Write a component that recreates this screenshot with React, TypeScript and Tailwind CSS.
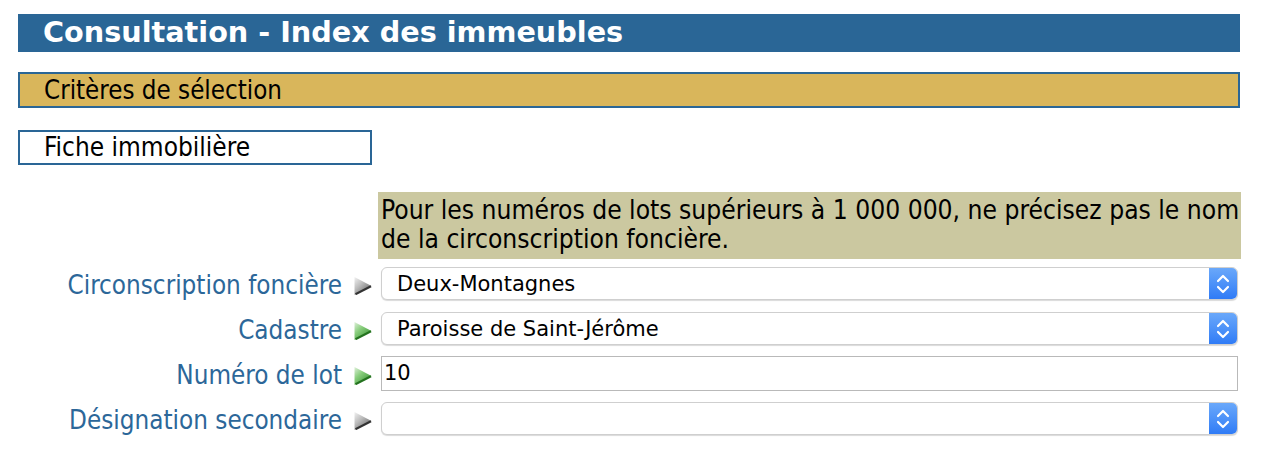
import React from "react";

const tahoma = { fontFamily: '"DejaVu Sans Condensed", "DejaVu Sans", sans-serif' };

function Arrow({ green }: { green?: boolean }) {
  const id = green ? "ag" : "agr";
  return (
    <svg width="18" height="18" viewBox="0 0 18 18" className="shrink-0">
      <defs>
        <linearGradient id={id} x1="0" y1="0" x2="0.9" y2="1">
          {green ? (
            <>
              <stop offset="0" stopColor="#dff0da" />
              <stop offset="0.4" stopColor="#86cc7a" />
              <stop offset="1" stopColor="#2c8a29" />
            </>
          ) : (
            <>
              <stop offset="0" stopColor="#f2f2f2" />
              <stop offset="0.4" stopColor="#bdbdbd" />
              <stop offset="1" stopColor="#5a5a5a" />
            </>
          )}
        </linearGradient>
      </defs>
      <polygon points="0.5,0 17.5,9 0.5,18" fill={`url(#${id})`} />
      <line x1="1.5" y1="17.2" x2="17" y2="9.3" stroke={green ? "#24721f" : "#333"} strokeWidth="2.2" />
    </svg>
  );
}

function SelectBox({ value }: { value: string }) {
  return (
    <div className="flex h-[33px] flex-1 items-center rounded-[6px] border border-[#cfcfcf] bg-white shadow-[0_1px_1px_rgba(0,0,0,0.15)] overflow-hidden">
      <div
        className="flex-1 pl-[15px] pt-[2px] text-[21px] text-black"
        style={{ fontFamily: '"DejaVu Sans", sans-serif' }}
      >
        {value}
      </div>
      <div className="flex h-full w-[28px] items-center justify-center bg-gradient-to-b from-[#6aa8fa] to-[#2f7bf6]">
        <svg width="14" height="22" viewBox="0 0 14 22">
          <polyline points="2,8 7,3 12,8" fill="none" stroke="white" strokeWidth="2.2" strokeLinecap="round" strokeLinejoin="round" />
          <polyline points="2,14 7,19 12,14" fill="none" stroke="white" strokeWidth="2.2" strokeLinecap="round" strokeLinejoin="round" />
        </svg>
      </div>
    </div>
  );
}

function Row({ label, green, children }: { label: string; green?: boolean; children: React.ReactNode }) {
  return (
    <div className="flex h-[45px] items-center">
      <div className="w-[324px] pt-[4px] text-right text-[25.8px] text-[#2c6799]" style={tahoma}>
        {label}
      </div>
      <div className="ml-[12px] mr-[9px] flex items-center pt-[4px]">
        <Arrow green={green} />
      </div>
      <div className="mr-[2px] flex flex-1">{children}</div>
    </div>
  );
}

export default function App() {
  return (
    <div className="h-[462px] w-[1262px] bg-white pl-[18px] pt-[14px]" style={tahoma}>
      <div className="w-[1222px]">
        <div
          className="flex h-[38px] items-center bg-[#2a6696] pl-[25px] text-[28.7px] font-bold text-white"
          style={{ fontFamily: '"DejaVu Sans", sans-serif' }}
        >
          Consultation - Index des immeubles
        </div>
        <div className="mt-[20px] flex h-[36px] items-center border-2 border-[#2a6696] bg-[#d9b65b] pl-[24px] text-[25.7px] text-black">
          Critères de sélection
        </div>
        <div className="mt-[22px] flex h-[35px] w-[354px] items-center border-2 border-[#2a6696] bg-white pl-[24px] text-[26px] text-black">
          Fiche immobilière
        </div>
        <div className="ml-[360px] mt-[27px] h-[67px] w-[863px] bg-[#cbc8a0] pl-[3px] pt-[4px] text-[26.2px] leading-[29px] text-black whitespace-nowrap">
          Pour les numéros de lots supérieurs à 1 000 000, ne précisez pas le nom
          <br />
          de la circonscription foncière.
        </div>
        <div className="mt-[2px]">
          <Row label="Circonscription foncière">
            <SelectBox value="Deux-Montagnes" />
          </Row>
          <Row label="Cadastre" green>
            <SelectBox value="Paroisse de Saint-Jérôme" />
          </Row>
          <Row label="Numéro de lot" green>
            <div
              className="flex h-[35px] flex-1 items-center border border-[#b9b9b9] bg-white pl-[2px] text-[21px] text-black"
              style={{ fontFamily: '"DejaVu Sans", sans-serif' }}
            >
              10
            </div>
          </Row>
          <Row label="Désignation secondaire">
            <SelectBox value="" />
          </Row>
        </div>
      </div>
    </div>
  );
}
